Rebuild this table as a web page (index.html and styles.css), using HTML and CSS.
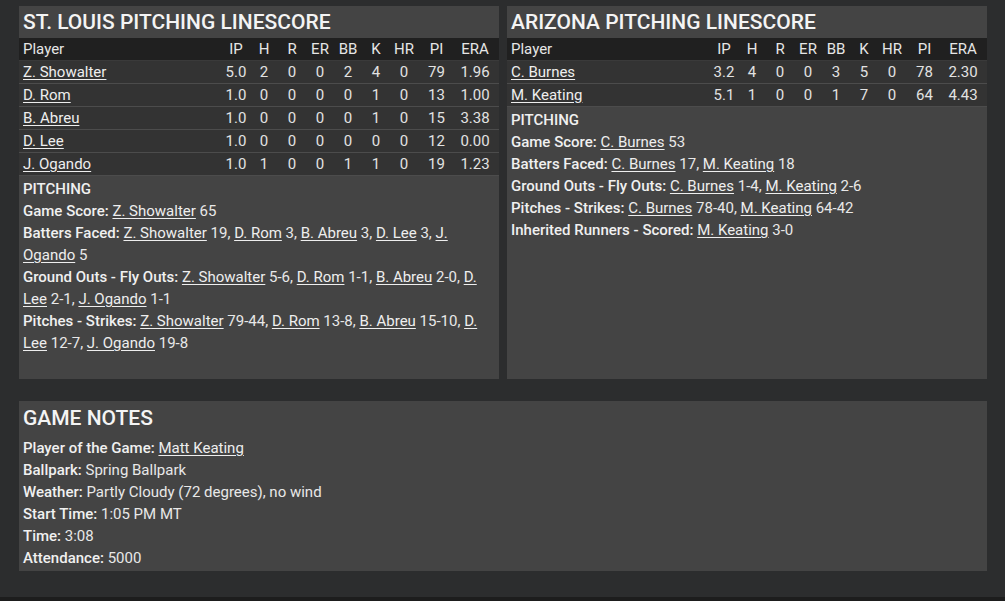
FILE: index.html
```html
<!DOCTYPE html>
<html>
<head>
<meta charset="utf-8">
<link rel="stylesheet" href="styles.css">
</head>
<body>
<div class="page">
  <div class="top-row">
    <section class="panel">
      <h2 class="panel-title">ST. LOUIS PITCHING LINESCORE</h2>
      <div class="table">
        <div class="tr head"><span class="player">Player</span><span class="c">IP</span><span class="c">H</span><span class="c">R</span><span class="c">ER</span><span class="c">BB</span><span class="c">K</span><span class="c">HR</span><span class="c pi">PI</span><span class="c era">ERA</span></div>
        <div class="tr"><span class="player"><a>Z. Showalter</a></span><span class="c">5.0</span><span class="c">2</span><span class="c">0</span><span class="c">0</span><span class="c">2</span><span class="c">4</span><span class="c">0</span><span class="c pi">79</span><span class="c era">1.96</span></div>
        <div class="tr"><span class="player"><a>D. Rom</a></span><span class="c">1.0</span><span class="c">0</span><span class="c">0</span><span class="c">0</span><span class="c">0</span><span class="c">1</span><span class="c">0</span><span class="c pi">13</span><span class="c era">1.00</span></div>
        <div class="tr"><span class="player"><a>B. Abreu</a></span><span class="c">1.0</span><span class="c">0</span><span class="c">0</span><span class="c">0</span><span class="c">0</span><span class="c">1</span><span class="c">0</span><span class="c pi">15</span><span class="c era">3.38</span></div>
        <div class="tr"><span class="player"><a>D. Lee</a></span><span class="c">1.0</span><span class="c">0</span><span class="c">0</span><span class="c">0</span><span class="c">0</span><span class="c">0</span><span class="c">0</span><span class="c pi">12</span><span class="c era">0.00</span></div>
        <div class="tr"><span class="player"><a>J. Ogando</a></span><span class="c">1.0</span><span class="c">1</span><span class="c">0</span><span class="c">0</span><span class="c">1</span><span class="c">1</span><span class="c">0</span><span class="c pi">19</span><span class="c era">1.23</span></div>
      </div>
      <div class="notes top">
        <p><b>PITCHING</b></p>
        <p><b>Game Score:</b> <a>Z. Showalter</a> 65</p>
        <p><b>Batters Faced:</b> <a>Z. Showalter</a> 19, <a>D. Rom</a> 3, <a>B. Abreu</a> 3, <a>D. Lee</a> 3, <a>J. Ogando</a> 5</p>
        <p><b>Ground Outs - Fly Outs:</b> <a>Z. Showalter</a> 5-6, <a>D. Rom</a> 1-1, <a>B. Abreu</a> 2-0, <a>D. Lee</a> 2-1, <a>J. Ogando</a> 1-1</p>
        <p><b>Pitches - Strikes:</b> <a>Z. Showalter</a> 79-44, <a>D. Rom</a> 13-8, <a>B. Abreu</a> 15-10, <a>D. Lee</a> 12-7, <a>J. Ogando</a> 19-8</p>
      </div>
    </section>
    <section class="panel">
      <h2 class="panel-title">ARIZONA PITCHING LINESCORE</h2>
      <div class="table">
        <div class="tr head"><span class="player">Player</span><span class="c">IP</span><span class="c">H</span><span class="c">R</span><span class="c">ER</span><span class="c">BB</span><span class="c">K</span><span class="c">HR</span><span class="c pi">PI</span><span class="c era">ERA</span></div>
        <div class="tr"><span class="player"><a>C. Burnes</a></span><span class="c">3.2</span><span class="c">4</span><span class="c">0</span><span class="c">0</span><span class="c">3</span><span class="c">5</span><span class="c">0</span><span class="c pi">78</span><span class="c era">2.30</span></div>
        <div class="tr"><span class="player"><a>M. Keating</a></span><span class="c">5.1</span><span class="c">1</span><span class="c">0</span><span class="c">0</span><span class="c">1</span><span class="c">7</span><span class="c">0</span><span class="c pi">64</span><span class="c era">4.43</span></div>
      </div>
      <div class="notes top">
        <p><b>PITCHING</b></p>
        <p><b>Game Score:</b> <a>C. Burnes</a> 53</p>
        <p><b>Batters Faced:</b> <a>C. Burnes</a> 17, <a>M. Keating</a> 18</p>
        <p><b>Ground Outs - Fly Outs:</b> <a>C. Burnes</a> 1-4, <a>M. Keating</a> 2-6</p>
        <p><b>Pitches - Strikes:</b> <a>C. Burnes</a> 78-40, <a>M. Keating</a> 64-42</p>
        <p><b>Inherited Runners - Scored:</b> <a>M. Keating</a> 3-0</p>
      </div>
    </section>
  </div>
  <section class="panel game-notes">
    <h2 class="panel-title">GAME NOTES</h2>
    <div class="notes gn">
      <p><b>Player of the Game:</b> <a>Matt Keating</a></p>
      <p><b>Ballpark:</b> Spring Ballpark</p>
      <p><b>Weather:</b> Partly Cloudy (72 degrees), no wind</p>
      <p><b>Start Time:</b> 1:05 PM MT</p>
      <p><b>Time:</b> 3:08</p>
      <p><b>Attendance:</b> 5000</p>
    </div>
  </section>
</div>
</body>
</html>
```

FILE: styles.css
```css
* { box-sizing: border-box; }
html, body { margin: 0; padding: 0; }
body {
  background: #1d1d1d;
  font-family: Roboto, "Liberation Sans", sans-serif;
  font-size: 15px;
  color: #e8e8e8;
  width: 1005px;
  height: 601px;
  overflow: hidden;
}
.page {
  height: 597px;
  background: #2c2d2e;
  padding: 6px 18px 0 19px;
}
.top-row {
  display: grid;
  grid-template-columns: 480px 480px;
  gap: 8px;
}
.panel {
  background: #444444;
  display: flex;
  flex-direction: column;
}
.panel-title {
  margin: 0;
  height: 32px;
  line-height: 32px;
  padding: 0 4px;
  font-size: 21px;
  font-weight: 500;
  color: #f4f4f4;
}
.table { display: flex; flex-direction: column; }
.tr {
  display: flex;
  height: 23px;
  align-items: center;
  background: #333333;
  border-bottom: 1px solid #4c4c4c;
  color: #e2e2e2;
  padding-right: 4px;
}
.tr.head {
  background: #202020;
  border-bottom: 1px solid #3a3a3a;
  color: #e6e6e6;
}
.player { flex: 1; padding-left: 4px; }
.c { width: 28px; text-align: center; }
.c.pi { width: 37px; }
.c.era { width: 40px; }
a { color: #eeeeee; text-decoration: underline; text-underline-offset: 2px; }
.notes {
  padding: 2px 4px 4px 4px;
}
.notes.top { padding-bottom: 25px; }
.notes p { margin: 0; line-height: 22px; }
.notes b { font-weight: 500; color: #f0f0f0; }
.game-notes {
  margin-top: 22px;
  width: 968px;
}
.game-notes .panel-title { height: 33px; line-height: 34px; }
.notes.gn { padding-top: 3px; padding-bottom: 2px; }
```
